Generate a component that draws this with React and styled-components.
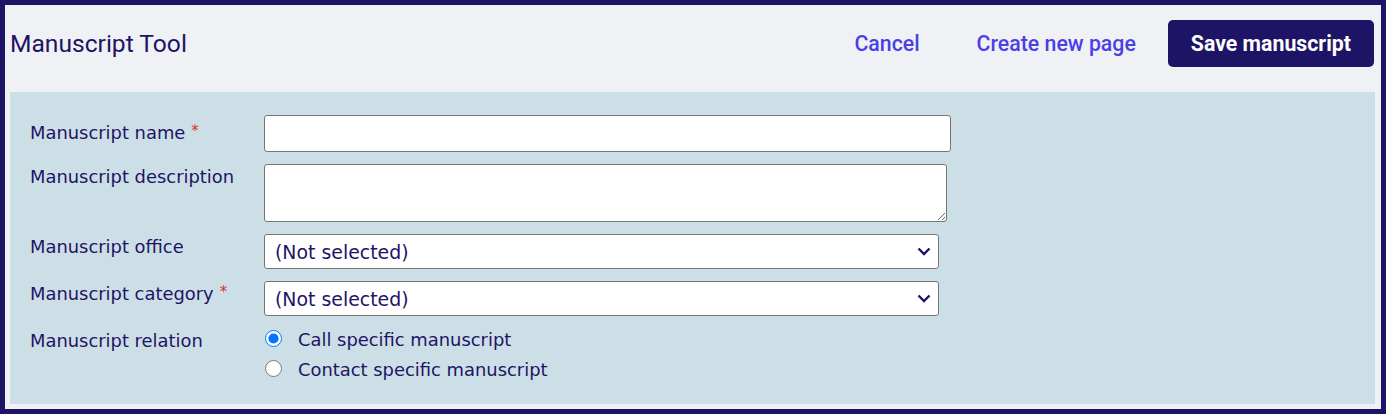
import React from 'react'
import styled, { createGlobalStyle } from 'styled-components';

const GlobalStyle = createGlobalStyle`
    body {
        margin: 0;
        background: #1e1466;
    }
`

const Frame = styled.div`
    box-sizing: border-box;
    width: 1386px;
    height: 414px;
    border: 5px solid #1e1466;
    background: #f0f1f5;
    padding: 0 6px 5px 5px;
    display: flex;
    flex-direction: column;
`
const Header = styled.header`
    height: 87px;
    box-sizing: border-box;
    display: flex;
    align-items: center;
    padding: 0 1px 10px 0;
`
const Title = styled.h1`
    margin: 0;
    font-family: Roboto, sans-serif;
    font-weight: 400;
    font-size: 24.6px;
    color: #1e1466;
    margin-right: auto;
`
const LinkButton = styled.button`
    background: none;
    border: none;
    padding: 0;
    margin-right: ${props => props.gap}px;
    font-family: Roboto, sans-serif;
    font-weight: 500;
    font-size: 21.3px;
    color: #4b3fe6;
    cursor: pointer;
`
const SaveButton = styled.button`
    height: 47px;
    padding: 0 23px;
    border: none;
    border-radius: 5px;
    background: #1e1466;
    color: #fff;
    font-family: Roboto, sans-serif;
    font-weight: 700;
    font-size: 21.3px;
    cursor: pointer;
`
const Panel = styled.main`
    flex: 1;
    background: #cddfe6;
    padding: 23px 20px 0;
    display: grid;
    grid-template-columns: 234px auto;
    justify-content: start;
    row-gap: 12px;
    align-content: start;
    font-family: "DejaVu Sans", Verdana, sans-serif;
    color: #1e1466;
`
const Label = styled.label`
    font-size: 17.9px;
    line-height: 20px;
    padding-top: ${props => props.top}px;
`
const Required = styled.span`
    color: #d9322b;
    font-size: 15px;
    line-height: 0;
    vertical-align: 3px;
    margin-left: 6px;
`
const TextInput = styled.input`
    box-sizing: border-box;
    width: 687px;
    height: 37px;
    margin: 0;
    border: 1px solid #767676;
    border-radius: 3px;
    background: #fff;
`
const TextArea = styled.textarea`
    box-sizing: border-box;
    width: 683px;
    height: 58px;
    margin: 0;
    border: 1px solid #767676;
    border-radius: 3px;
    background: #fff;
    display: block;
`
const SelectWrap = styled.div`
    position: relative;
    width: 675px;
    height: 35px;
`
const Select = styled.select`
    box-sizing: border-box;
    appearance: none;
    width: 100%;
    height: 100%;
    margin: 0;
    padding: 0 30px 0 10px;
    border: 1px solid #767676;
    border-radius: 3px;
    background: #fff;
    font-family: "DejaVu Sans", Verdana, sans-serif;
    font-size: 18.9px;
    color: #1e1466;
`
const Chevron = styled.svg`
    position: absolute;
    right: 8px;
    top: 13px;
    pointer-events: none;
`
const RadioGroup = styled.div`
    display: flex;
    flex-direction: column;
    gap: 10px;
    padding-top: 2px;
`
const RadioRow = styled.label`
    display: flex;
    align-items: center;
    gap: 16px;
    font-size: 17.9px;
    line-height: 20px;
`
const Radio = styled.input`
    width: 17px;
    height: 17px;
    margin: 0 0 3px 1px;
    accent-color: #0075ff;
`

function DropDown() {
    return (
        <SelectWrap>
            <Select defaultValue="">
                <option value="">(Not selected)</option>
            </Select>
            <Chevron width="14" height="9" viewBox="0 0 14 9">
                <path d="M1.5 1.5 L7 7 L12.5 1.5" fill="none" stroke="#1e1466" strokeWidth="2.4" />
            </Chevron>
        </SelectWrap>
    )
}

function App() {
    return (
        <>
            <GlobalStyle />
            <Frame>
                <Header>
                    <Title>Manuscript Tool</Title>
                    <LinkButton gap={57}>Cancel</LinkButton>
                    <LinkButton gap={32}>Create new page</LinkButton>
                    <SaveButton>Save manuscript</SaveButton>
                </Header>
                <Panel>
                    <Label top={8}>Manuscript name<Required>*</Required></Label>
                    <TextInput type="text" />
                    <Label top={3}>Manuscript description</Label>
                    <TextArea />
                    <Label top={3}>Manuscript office</Label>
                    <DropDown />
                    <Label top={3}>Manuscript category<Required>*</Required></Label>
                    <DropDown />
                    <Label top={3}>Manuscript relation</Label>
                    <RadioGroup>
                        <RadioRow><Radio type="radio" name="relation" defaultChecked />Call specific manuscript</RadioRow>
                        <RadioRow><Radio type="radio" name="relation" />Contact specific manuscript</RadioRow>
                    </RadioGroup>
                </Panel>
            </Frame>
        </>
    )
}

export default App
